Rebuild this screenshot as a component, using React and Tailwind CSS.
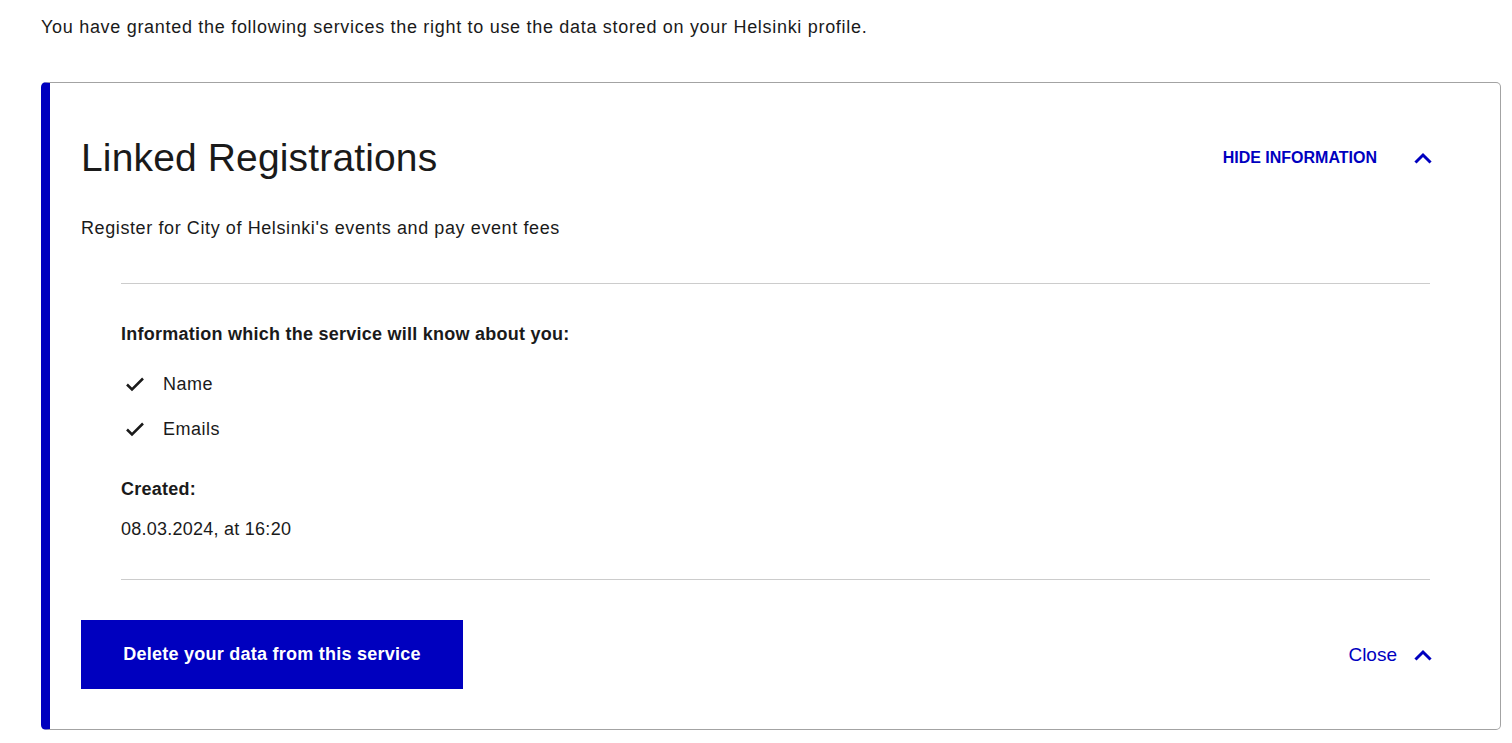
import React from 'react'

const font = { fontFamily: '"Liberation Sans", Arial, sans-serif' }

const ChevronUp = () => (
  <svg viewBox="0 0 24 24" className="w-6 h-6 shrink-0" fill="none" stroke="currentColor" strokeWidth="3" strokeLinecap="square">
    <path d="M5.5 15.5 L12 9 L18.5 15.5" />
  </svg>
)

const Check = () => (
  <svg viewBox="0 0 24 24" className="w-6 h-6 shrink-0" fill="none" stroke="currentColor" strokeWidth="2.5">
    <path d="M4 12.5 L9 17.5 L20 6.5" />
  </svg>
)

const App = () => {
  return (
    <div className="min-h-screen bg-white text-[#1a1a1a] px-[41px] pt-[15px] pb-4" style={font}>
      <p className="text-[18px] leading-6 tracking-[0.7px]">
        You have granted the following services the right to use the data stored on your Helsinki profile.
      </p>

      {/* Service card */}
      <div className="mt-[43px] w-[1460px] border border-[#a3a3a3] border-l-[9px] border-l-[#0000bf] rounded-[5px] pl-[31px] pr-[65px] pt-[51px] pb-[40px]">
        <div className="flex items-center justify-between h-12">
          <h2 className="text-[39px] leading-12 font-normal tracking-[0.15px]">Linked Registrations</h2>
          <button className="flex items-center gap-[34px] text-[#0000bf] font-bold text-[16px] leading-6">
            HIDE INFORMATION
            <ChevronUp />
          </button>
        </div>

        <p className="mt-8 text-[18px] leading-7 tracking-[0.6px]">Register for City of Helsinki's events and pay event fees</p>

        <div className="mt-[41px] ml-10 mr-[5px] border-t border-[#cccccc] pt-[38px] pb-[38px] border-b">
          <p className="font-bold text-[18px] leading-6 tracking-[0.25px]">Information which the service will know about you:</p>
          <ul className="mt-[26px] flex flex-col gap-[21px]">
            <li className="flex items-center gap-4 text-[18px] leading-6 pl-[2px] tracking-[0.5px]">
              <Check />
              Name
            </li>
            <li className="flex items-center gap-4 text-[18px] leading-6 pl-[2px] tracking-[0.5px]">
              <Check />
              Emails
            </li>
          </ul>
          <p className="mt-9 font-bold text-[18px] leading-6 tracking-[0.25px]">Created:</p>
          <p className="mt-4 text-[18px] leading-6 tracking-[0.25px]">08.03.2024, at 16:20</p>
        </div>

        <div className="mt-10 flex items-center justify-between">
          <button className="w-[382px] h-[69px] bg-[#0000bf] text-white font-bold text-[18px] tracking-[0.25px]">
            Delete your data from this service
          </button>
          <button className="flex items-center gap-[14px] text-[#0000bf] text-[19px] leading-6">
            Close
            <ChevronUp />
          </button>
        </div>
      </div>
    </div>
  )
}

export default App
